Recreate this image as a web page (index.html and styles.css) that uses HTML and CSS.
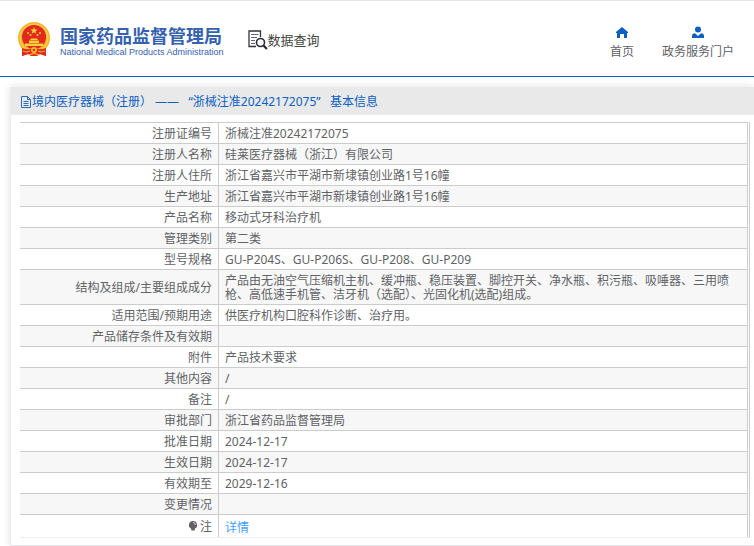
FILE: index.html
```html
<!DOCTYPE html>
<html lang="zh-CN">

<head>
  <meta charset="UTF-8" />
  <meta name="viewport" content="width=device-width, initial-scale=1.0" />
  <title>数据查询</title>
  <link rel="stylesheet" href="styles.css">
</head>

<body>
  <!-- 头部 -->
  <header class="header">
    <a class="logo" href="#">
      <svg class="emblem" viewBox="0 0 32 34" aria-hidden="true">
        <path fill="#e02a1f" d="M4 24 L28 24 L28 34 L22 32 L16 34 L10 32 L4 34 Z" />
        <circle cx="16" cy="16" r="16" fill="#f3b62c" />
        <circle cx="16" cy="16" r="14" fill="none" stroke="#fbd45c" stroke-width="1" />
        <circle cx="16" cy="15" r="12" fill="#e3291d" />
        <path fill="#fbcf3a" d="M16 5 l1 2.4 2.6.1 -2 1.7 .7 2.5 -2.3-1.4 -2.3 1.4 .7-2.5 -2-1.7 2.6-.1z" />
        <g fill="#fbcf3a">
          <circle cx="10" cy="11" r="1" />
          <circle cx="22" cy="11" r="1" />
          <circle cx="12.500" cy="13" r="1" />
          <circle cx="19.500" cy="13" r="1" />
          <path d="M12 18 L13 16.500 H19 L20 18 Z M11 18.500 H21 V21 H11 Z M7 21.500 H25 V24 H7 Z" />
        </g>
        <path fill="#e3291d" d="M4 26 Q9 28 12 27 H20 Q23 28 28 26 V34 L22 32 L19 34 H13 L10 32 L4 34 Z" />
        <circle cx="16" cy="28" r="3" fill="#f6bd30" />
        <circle cx="16" cy="28" r="1.200" fill="#e3291d" />
        <path fill="none" stroke="#f6bd30" d="M5 29 Q9 31 12 29 M27 29 Q23 31 20 29 M10 33 Q16 30 22 33" />
      </svg>
      <span class="logo-text">
        <span class="logo-cn">国家药品监督管理局</span>
        <span class="logo-en">National Medical Products Administration</span>
      </span>
    </a>
    <a class="query" href="#">
      <svg class="query-icon" viewBox="0 0 20 20" aria-hidden="true">
        <path fill="none" stroke="#33333f" stroke-width="1.300" d="M8 16.500 H1 V1 H12.500 V7" />
        <path stroke="#66666f" d="M3 4.500 H10.500 M3 7.500 H9 M3 10.500 H7 M3 13.500 H7" />
        <circle cx="12.500" cy="12.500" r="4" fill="#fff" stroke="#2b2b3a" stroke-width="1.600" />
        <path stroke="#2b2b3a" stroke-width="2.200" d="M15.500 15.500 L19 19" />
      </svg>
      <span>数据查询</span>
    </a>
    <nav class="nav">
      <a href="#">
        <svg viewBox="0 0 14 14" aria-hidden="true">
          <path fill="#0c5fc4" d="M7 1 L13 6 V7 H12 V12 H9 V8 H5 V12 H2 V7 H1 V6 Z" />
        </svg>
        <span>首页</span>
      </a>
      <a href="#">
        <svg viewBox="0 0 14 14" aria-hidden="true">
          <circle cx="7" cy="3.500" r="3" fill="#0c5fc4" />
          <path fill="#0c5fc4" d="M1 12 V10 Q1 7.500 4 7.200 L7 10 L10 7.200 Q13 7.500 13 10 V12 Z" />
        </svg>
        <span>政务服务门户</span>
      </a>
    </nav>
  </header>

  <!-- 详情 -->
  <main class="card">
    <h1 class="card-title">
      <svg viewBox="0 0 12 12" aria-hidden="true">
        <path fill="none" stroke="#2a68bf" d="M1.500 .5 H7.500 L10.500 3.500 V11.500 H1.500 Z M7.500 .5 V3.500 H10.500 M3.500 5.500 H8.500 M3.500 7.500 H8.500 M3.500 9.500 H8.500" />
      </svg>
      <span>境内医疗器械（注册） ——&nbsp;&nbsp; “浙械注准20242172075”&nbsp;&nbsp; 基本信息</span>
    </h1>
    <div class="card-body">
      <table class="info">
        <tbody>
          <tr><th scope="row">注册证编号</th><td>浙械注准20242172075</td></tr>
          <tr><th scope="row">注册人名称</th><td>硅莱医疗器械（浙江）有限公司</td></tr>
          <tr><th scope="row">注册人住所</th><td>浙江省嘉兴市平湖市新埭镇创业路1号16幢</td></tr>
          <tr><th scope="row">生产地址</th><td>浙江省嘉兴市平湖市新埭镇创业路1号16幢</td></tr>
          <tr><th scope="row">产品名称</th><td>移动式牙科治疗机</td></tr>
          <tr><th scope="row">管理类别</th><td>第二类</td></tr>
          <tr><th scope="row">型号规格</th><td>GU-P204S、GU-P206S、GU-P208、GU-P209</td></tr>
          <tr><th scope="row">结构及组成/主要组成成分</th><td>产品由无油空气压缩机主机、缓冲瓶、稳压装置、脚控开关、净水瓶、积污瓶、吸唾器、三用喷枪、高低速手机管、洁牙机（选配）、光固化机(选配)组成。</td></tr>
          <tr><th scope="row">适用范围/预期用途</th><td>供医疗机构口腔科作诊断、治疗用。</td></tr>
          <tr><th scope="row">产品储存条件及有效期</th><td></td></tr>
          <tr><th scope="row">附件</th><td>产品技术要求</td></tr>
          <tr><th scope="row">其他内容</th><td>/</td></tr>
          <tr><th scope="row">备注</th><td>/</td></tr>
          <tr><th scope="row">审批部门</th><td>浙江省药品监督管理局</td></tr>
          <tr><th scope="row">批准日期</th><td>2024-12-17</td></tr>
          <tr><th scope="row">生效日期</th><td>2024-12-17</td></tr>
          <tr><th scope="row">有效期至</th><td>2029-12-16</td></tr>
          <tr><th scope="row">变更情况</th><td></td></tr>
          <tr class="note">
            <th scope="row">
              <svg viewBox="0 0 10 12" aria-hidden="true">
                <path fill="#606266" d="M5 1 A4 4 0 0 1 7 8.500 L6.500 10.500 H3.500 L3 8.500 A4 4 0 0 1 5 1 Z" />
                <path fill="none" stroke="#ddd" d="M5 2.500 Q7 2.500 7.500 5" />
              </svg>注
            </th>
            <td><a href="#">详情</a></td>
          </tr>
        </tbody>
      </table>
    </div>
  </main>
</body>

</html>
```
FILE: styles.css
```css
* {
  box-sizing: border-box;
  margin: 0;
  padding: 0;
}

body {
  background: #fff;
  color: #606266;
  font: 12px/14px "Noto Sans", "Noto Sans CJK SC", sans-serif;
}

a {
  color: inherit;
  text-decoration: none;
}

svg {
  display: block;
}

/* 头部 */
.header {
  display: flex;
  align-items: center;
  height: 77px;
  padding: 0 20px 0 18px;
  border-top: 1px solid #e4e4e4;
  border-bottom: 1px solid #0c5fc4;
}

.logo {
  display: flex;
  align-items: center;
  gap: 10px;
  color: #3561ae;
}

.emblem {
  width: 32px;
  height: 34px;
}

.logo-text {
  display: flex;
  flex-direction: column;
  padding-top: 4px;
  white-space: nowrap;
}

.logo-cn {
  font: bold 18px/22px "Noto Sans CJK SC", sans-serif;
}

.logo-en {
  font: 500 9px/12px "Liberation Sans", sans-serif;
}

.query {
  display: flex;
  align-items: center;
  margin-left: 24px;
  padding-top: 3px;
  color: #444;
  font-size: 13px;
}

.query-icon {
  width: 20px;
  height: 20px;
}

.nav {
  display: flex;
  gap: 28px;
  margin-left: auto;
  padding-top: 8px;
}

.nav a {
  display: flex;
  flex-direction: column;
  align-items: center;
  gap: 5px;
}

.nav svg {
  width: 14px;
  height: 14px;
}

/* 详情 */
.card {
  margin: 10px 0 0 10px;
  border-bottom: 1px solid #e6e6ea;
  border-left: 1px solid #ebebee;
  box-shadow: 0 0 8px rgba(0, 0, 0, 0.12);
}

.card-title {
  display: flex;
  align-items: center;
  height: 28px;
  padding: 2px 9px 0;
  border-bottom: 1px solid #ebeef5;
  background: #e9e9e9;
  color: #0c5fc4;
  font-size: 12px;
  font-weight: normal;
}

.card-title svg {
  width: 12px;
  height: 12px;
}

.card-body {
  padding: 7px 4px 7px 9px;
}

.info {
  width: 100%;
  border-right: 3px double #ccc;
  border-bottom: 1px solid #ebeef5;
  border-spacing: 0;
}

.info th,
.info td {
  height: 21px;
  padding: 4px 6px 2px;
  border-top: 1px solid #ccc;
}

.info th {
  width: 199px;
  border-right: 1px solid #ccc;
  font-weight: normal;
  text-align: right;
}

.info td {
  padding-right: 12px;
}

.info tr:nth-child(even) {
  background: #f7f7f7;
}

.info .note th,
.info .note td {
  height: 23px;
}

.info .note td {
  padding-top: 6px;
}

.note svg {
  display: inline-block;
  width: 10px;
  height: 12px;
  margin-right: 2px;
  vertical-align: -1px;
}

.note a {
  color: #409eff;
}
```
